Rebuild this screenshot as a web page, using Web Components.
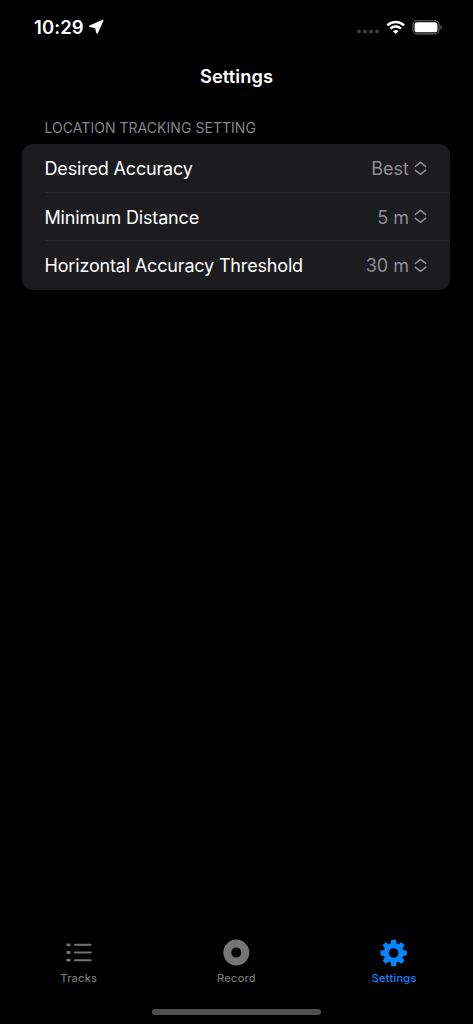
<!DOCTYPE html>
<html lang="en">
<head>
<meta charset="utf-8">
<meta name="viewport" content="width=device-width, initial-scale=1">
<title>Settings</title>
<style>
    body {
        margin: 0;
        background: #000000;
        font-family: Inter, "Liberation Sans", sans-serif;
    }
</style>
</head>
<body>
<settings-screen></settings-screen>

<script>
(function () {
    class StatusBar extends HTMLElement {
        connectedCallback() {
            this.attachShadow({ mode: 'open' });
            this.shadowRoot.innerHTML = `
                <style>
                    :host {
                        display: flex;
                        align-items: center;
                        justify-content: space-between;
                        height: 54px;
                        padding: 0 30px 0 34px;
                        box-sizing: border-box;
                        color: #ffffff;
                    }
                    .side {
                        display: flex;
                        align-items: center;
                    }
                    .time {
                        padding-bottom: 1px;
                        font-size: 18.5px;
                        font-weight: 600;
                        line-height: 22px;
                        letter-spacing: 0.1px;
                    }
                    svg { display: block; }
                    .arrow { margin-left: 4px; }
                    .dots { margin: 9px 7px 0 0; }
                    .wifi { margin-right: 7px; }
                </style>
                <div class="side">
                    <span class="time">${this.getAttribute('time')}</span>
                    <svg class="arrow" width="17" height="16" viewBox="0 0 17 16">
                        <path d="M14.8 1.4 9.1 14 7.7 8.5 1.8 7.3Z" fill="#fff" stroke="#fff" stroke-width="1.5" stroke-linejoin="round"/>
                    </svg>
                </div>
                <div class="side">
                    <svg class="dots" width="22" height="5" viewBox="0 0 22 5" fill="#414141">
                        <circle cx="2" cy="2.5" r="1.9"/><circle cx="8" cy="2.5" r="1.9"/>
                        <circle cx="14" cy="2.5" r="1.9"/><circle cx="20" cy="2.5" r="1.9"/>
                    </svg>
                    <svg class="wifi" width="19" height="15" viewBox="0 0 19 15" fill="none" stroke="#fff" stroke-width="2.4">
                        <path d="M1.4 5.4a11.9 11.9 0 0 1 16.6 0"/>
                        <path d="M4.4 8.6a7.6 7.6 0 0 1 10.6 0"/>
                        <path d="M9.7 14.1 6.9 11.3a4 4 0 0 1 5.6 0Z" fill="#fff" stroke="none"/>
                    </svg>
                    <svg width="31" height="15" viewBox="0 0 31 15">
                        <rect x="1" y="0.7" width="26" height="13.2" rx="4.2" fill="none" stroke="#6a6a6a" stroke-width="1.1"/>
                        <rect x="2.6" y="2.3" width="22.8" height="10" rx="2.6" fill="#fff"/>
                        <path d="M28.5 5c1.8.7 1.8 3.9 0 4.6Z" fill="#6a6a6a"/>
                    </svg>
                </div>
            `;
        }
    }

    class NavTitle extends HTMLElement {
        connectedCallback() {
            this.attachShadow({ mode: 'open' });
            this.shadowRoot.innerHTML = `
                <style>
                    :host {
                        display: flex;
                        align-items: center;
                        justify-content: center;
                        height: 46px;
                        padding-bottom: 2px;
                        box-sizing: border-box;
                        color: #ffffff;
                        font-size: 18.3px;
                        font-weight: 600;
                        line-height: 24px;
                        letter-spacing: 0.07px;
                    }
                </style>
                <slot></slot>
            `;
        }
    }

    class SettingsGroup extends HTMLElement {
        connectedCallback() {
            this.attachShadow({ mode: 'open' });
            this.shadowRoot.innerHTML = `
                <style>
                    :host {
                        display: block;
                        padding: 20px 23px 0 22px;
                    }
                    .heading {
                        padding: 0 22px 8px 22.5px;
                        color: #85858b;
                        font-size: 14px;
                        line-height: 16px;
                        letter-spacing: 0.04px;
                        text-transform: uppercase;
                        white-space: nowrap;
                    }
                    .card {
                        overflow: hidden;
                        border-radius: 11px;
                        background: #1c1c1e;
                    }
                </style>
                <div class="heading">${this.getAttribute('heading')}</div>
                <div class="card"><slot></slot></div>
            `;
        }
    }

    class SettingsRow extends HTMLElement {
        connectedCallback() {
            this.attachShadow({ mode: 'open' });
            this.shadowRoot.innerHTML = `
                <style>
                    :host {
                        display: block;
                        padding-left: 22.5px;
                        font-size: 18px;
                        line-height: 24px;
                    }
                    .row {
                        display: flex;
                        align-items: center;
                        justify-content: space-between;
                        height: 48.5px;
                        padding: 2.5px 22.5px 0 0;
                        box-sizing: border-box;
                        border-bottom: 1px solid #29292b;
                    }
                    :host(:last-child) .row { border-bottom-color: transparent; }
                    .label {
                        color: #ffffff;
                        letter-spacing: -0.17px;
                        white-space: nowrap;
                    }
                    .picker {
                        display: flex;
                        align-items: center;
                        gap: 5px;
                        color: #8d8d93;
                    }
                    svg {
                        display: block;
                        margin: 0 0.5px 1.5px 0;
                    }
                </style>
                <div class="row">
                    <span class="label"><slot></slot></span>
                    <span class="picker">
                        <span>${this.getAttribute('value')}</span>
                        <svg width="13" height="15" viewBox="0 0 13 15" fill="none" stroke="#8d8d93" stroke-width="1.6" stroke-linecap="round" stroke-linejoin="round">
                            <path d="m1.4 5.3 5.1-4 5.1 4M1.4 9.3l5.1 4 5.1-4"/>
                        </svg>
                    </span>
                </div>
            `;
        }
    }

    class TabItem extends HTMLElement {
        connectedCallback() {
            this.attachShadow({ mode: 'open' });
            this.shadowRoot.innerHTML = `
                <style>
                    :host {
                        display: flex;
                        flex: 1;
                        flex-direction: column;
                        align-items: center;
                        gap: 4px;
                        color: #757575;
                        font-size: 11px;
                        font-weight: 500;
                        line-height: 14px;
                        letter-spacing: 0.25px;
                    }
                    :host([selected]) { color: #0a84ff; }
                    ::slotted(svg) { display: block; }
                </style>
                <slot></slot>
                <span>${this.getAttribute('label')}</span>
            `;
        }
    }

    class TabBar extends HTMLElement {
        connectedCallback() {
            this.attachShadow({ mode: 'open' });
            this.shadowRoot.innerHTML = `
                <style>
                    :host { display: block; }
                    .tabs {
                        display: flex;
                        height: 70px;
                    }
                    .home-indicator {
                        width: 169px;
                        height: 6px;
                        margin: 0 auto 9px;
                        border-radius: 3px;
                        background: #505050;
                    }
                </style>
                <div class="tabs"><slot></slot></div>
                <div class="home-indicator"></div>
            `;
        }
    }

    class SettingsScreen extends HTMLElement {
        connectedCallback() {
            this.attachShadow({ mode: 'open' });
            this.shadowRoot.innerHTML = `
                <style>
                    :host {
                        display: flex;
                        flex-direction: column;
                        height: 1024px;
                        overflow: hidden;
                        background: #000000;
                    }
                    main { flex: 1; }
                </style>
                <status-bar time="10:29"></status-bar>
                <nav-title>Settings</nav-title>
                <main>
                    <settings-group heading="Location Tracking Setting">
                        <settings-row value="Best">Desired Accuracy</settings-row>
                        <settings-row value="5 m">Minimum Distance</settings-row>
                        <settings-row value="30 m">Horizontal Accuracy Threshold</settings-row>
                    </settings-group>
                </main>
                <tab-bar>
                    <tab-item label="Tracks">
                        <svg width="28" height="28" viewBox="0 0 28 28" fill="none" stroke="currentColor" stroke-width="2" stroke-linecap="round">
                            <path d="M10 5.8h15.8M10 13.5h15.8M10 21.2h15.8"/>
                            <path d="M2.7 5.8h1.6M2.7 13.5h1.6M2.7 21.2h1.6" stroke-width="2.8"/>
                        </svg>
                    </tab-item>
                    <tab-item label="Record">
                        <svg width="28" height="28" viewBox="0 0 28 28" fill="none" stroke="currentColor">
                            <circle cx="13.3" cy="13.6" r="9" stroke-width="8"/>
                        </svg>
                    </tab-item>
                    <tab-item label="Settings" selected>
                        <svg width="28" height="28" viewBox="-13.6 -14 28 28" fill="none" stroke="currentColor">
                            <circle r="7.4" stroke-width="5.2"/>
                            <g fill="currentColor" stroke-width="1.4" stroke-linejoin="round">
                                <path id="tooth" d="M-2.3-9-1.7-12.5H1.7L2.3-9Z"/>
                                <use href="#tooth" transform="rotate(45)"/>
                                <use href="#tooth" transform="rotate(90)"/>
                                <use href="#tooth" transform="rotate(135)"/>
                                <use href="#tooth" transform="rotate(180)"/>
                                <use href="#tooth" transform="rotate(225)"/>
                                <use href="#tooth" transform="rotate(270)"/>
                                <use href="#tooth" transform="rotate(315)"/>
                            </g>
                        </svg>
                    </tab-item>
                </tab-bar>
            `;
        }
    }

    customElements.define('status-bar', StatusBar);
    customElements.define('nav-title', NavTitle);
    customElements.define('settings-group', SettingsGroup);
    customElements.define('settings-row', SettingsRow);
    customElements.define('tab-item', TabItem);
    customElements.define('tab-bar', TabBar);
    customElements.define('settings-screen', SettingsScreen);
})();
</script>
</body>
</html>
